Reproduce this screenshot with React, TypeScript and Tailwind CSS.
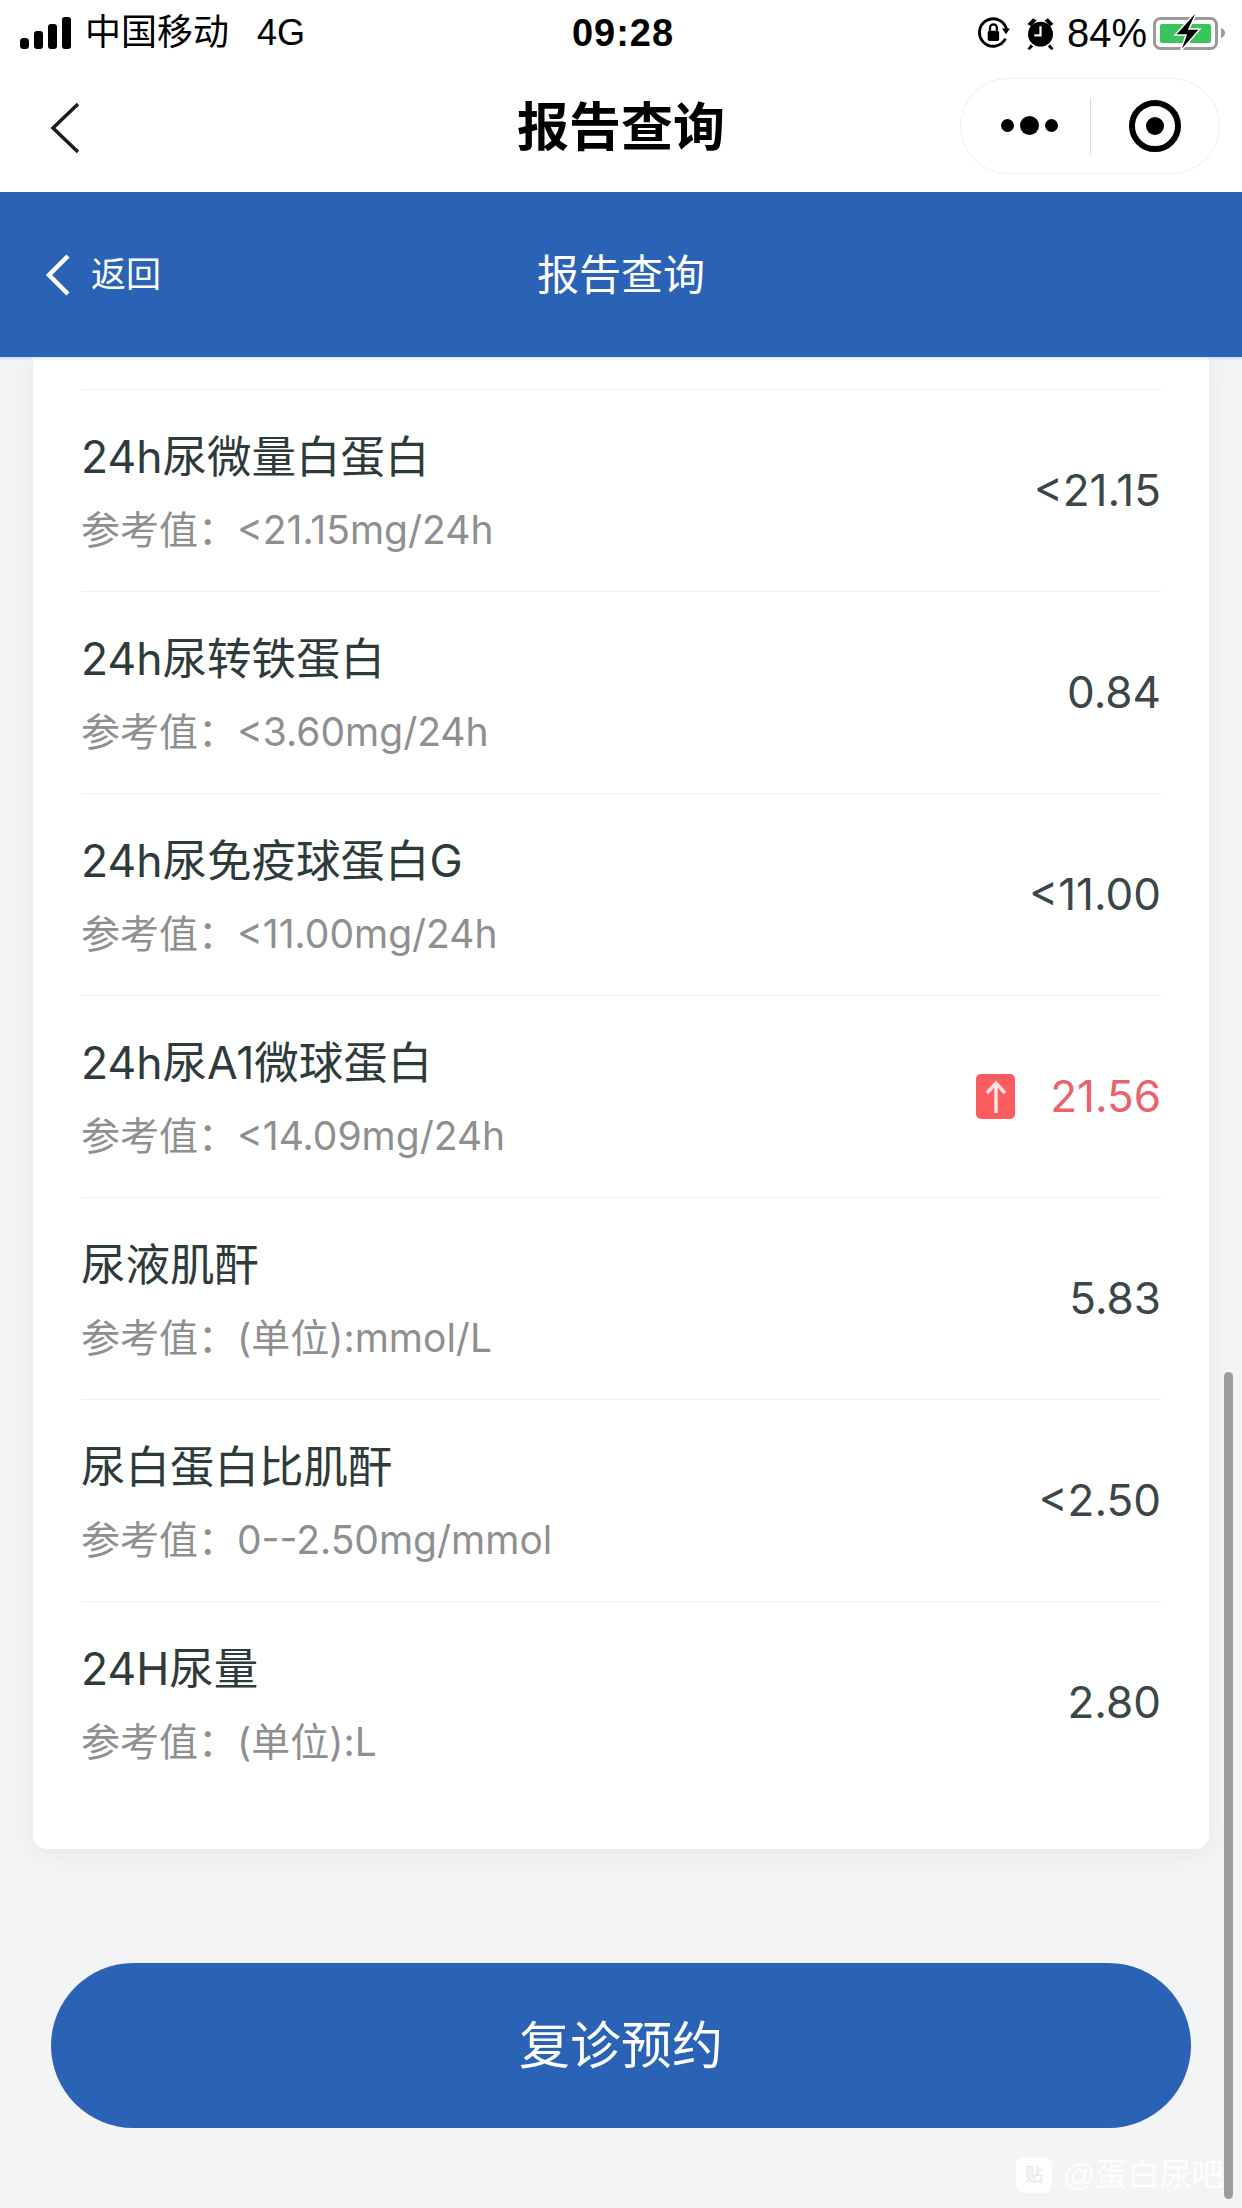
const rows = [
  { name: "24h尿微量白蛋白", ref: "参考值\uFF1A<21.15mg/24h", value: "<21.15" },
  { name: "24h尿转铁蛋白", ref: "参考值\uFF1A<3.60mg/24h", value: "0.84" },
  { name: "24h尿免疫球蛋白G", ref: "参考值\uFF1A<11.00mg/24h", value: "<11.00" },
  { name: "24h尿A1微球蛋白", ref: "参考值\uFF1A<14.09mg/24h", value: "21.56", high: true },
  { name: "尿液肌酐", ref: "参考值\uFF1A(单位):mmol/L", value: "5.83" },
  { name: "尿白蛋白比肌酐", ref: "参考值\uFF1A0--2.50mg/mmol", value: "<2.50" },
  { name: "24H尿量", ref: "参考值\uFF1A(单位):L", value: "2.80" },
];

const StatusBar = () => (
  <div className="grid h-[63px] grid-cols-[1fr_auto_1fr] items-center bg-white pt-[3px] pr-[16px] pl-[20px] text-black">
    <div className="flex items-center">
      <svg width="51" height="32" viewBox="0 0 51 32" fill="#000">
        <rect x="0" y="21" width="9" height="11" rx="3.500" />
        <rect x="14" y="14" width="9" height="18" rx="3" />
        <rect x="28" y="7" width="9" height="25" rx="3" />
        <rect x="42" y="0" width="9" height="32" rx="3" />
      </svg>
      <span className="ml-[14px] text-[36px] leading-none">中国移动</span>
      <span className="ml-[28px] text-[36px] leading-none">4G</span>
    </div>
    <span className="text-[38px] leading-none font-bold tracking-[1px]">09:28</span>
    <div className="flex items-center justify-end">
      <svg width="32" height="32" viewBox="0 0 28 28" fill="none">
        <path d="M24 19a12 12 0 1 1 1-8" stroke="#000" strokeWidth="2.500" />
        <path d="M21 10h7l-3.500 5z" fill="#000" />
        <rect x="8.500" y="12" width="10" height="9" rx="1.500" fill="#000" />
        <path d="M10.500 12V9.500a3 3 0 0 1 6 0V12" stroke="#000" strokeWidth="2" />
      </svg>
      <svg className="ml-[16px]" width="29" height="34" viewBox="0 0 25 30" fill="#000">
        <circle cx="12.500" cy="16" r="11" />
        <path d="M1 7l5-5 3 2-5 5zM24 7l-5-5-3 2 5 5zM4 25l-3 4 2 1 3-3zM21 25l3 4-2 1-3-3z" />
        <path d="M12.500 9v8H7" stroke="#fff" strokeWidth="2" fill="none" />
      </svg>
      <span className="ml-[12px] text-[40px] leading-none">84%</span>
      <svg className="ml-[6px]" width="73" height="38" viewBox="0 0 73 38" fill="none">
        <rect x="1.500" y="4.500" width="62" height="30" rx="6" stroke="#9a9a9a" strokeWidth="3" />
        <rect x="7" y="10" width="51" height="19" rx="2" fill="#3cc45c" />
        <path d="M68 14c3 1 4 3 4 5s-1 4-4 5z" fill="#9a9a9a" />
        <path d="M41 0L22 21h11l-6 17 20-23H36l7-15z" fill="#000" stroke="#fff" strokeWidth="1.500" />
      </svg>
    </div>
  </div>
);

const NavBar = () => (
  <div className="grid h-[129px] grid-cols-[1fr_auto_1fr] items-center bg-white">
    <div className="pl-[50px]">
      <svg width="30" height="52" viewBox="0 0 30 52" fill="none">
        <path d="M28 2L3 26l25 24" stroke="#1a1a1a" strokeWidth="3.500" />
      </svg>
    </div>
    <span className="text-[52px] leading-none font-bold text-black">报告查询</span>
    <div className="flex justify-end pr-[22px]">
      <div className="mb-[4px] flex h-[96px] w-[260px] items-center rounded-full border border-[#eeeeee]">
        <div className="flex w-[129px] items-center justify-center gap-[6px] pl-[7px]">
          <span className="h-[13px] w-[13px] rounded-full bg-black" />
          <span className="h-[19px] w-[19px] rounded-full bg-black" />
          <span className="h-[13px] w-[13px] rounded-full bg-black" />
        </div>
        <div className="h-[56px] w-px bg-[#dddddd]" />
        <div className="flex flex-1 items-center justify-center">
          <div className="flex h-[52px] w-[52px] items-center justify-center rounded-full border-[6px] border-black">
            <span className="h-[18px] w-[18px] rounded-full bg-black" />
          </div>
        </div>
      </div>
    </div>
  </div>
);

const Header = () => (
  <div className="relative z-10 grid h-[165px] grid-cols-[1fr_auto_1fr] items-center bg-[#2a62b5] text-white shadow-[0_2px_2px_rgba(120,170,210,0.25)]">
    <div className="flex items-center pl-[44px]">
      <svg width="27" height="42" viewBox="0 0 27 42" fill="none">
        <path d="M24 2L5 21l19 19" stroke="#fff" strokeWidth="4.500" />
      </svg>
      <span className="ml-[20px] text-[35px] leading-none">返回</span>
    </div>
    <span className="pt-[2px] text-[42px] leading-none">报告查询</span>
  </div>
);

const Row = ({ name, ref: refText, value, high }: (typeof rows)[number] & { high?: boolean }) => (
  <div className="flex h-[202px] items-center justify-between border-b border-[#eeeeee] font-['Inter','Noto_Sans_CJK_SC',sans-serif]">
    <div className="flex flex-col gap-[26px]">
      <span className="text-[44.5px] leading-[52px] text-[#2e3b3b]">{name}</span>
      <span className="text-[39px] leading-[42px] text-[#8f8f8f]">{refText}</span>
    </div>
    <div className="mb-[2px] flex items-center">
      {high && (
        <div className="mt-[2px] mr-[35px] flex h-[45px] w-[39px] items-center justify-center rounded-[5px] bg-[#fb5c5f]">
          <svg width="22" height="34" viewBox="0 0 22 34" fill="none">
            <path d="M11 33V3M2 13l9-10 9 10" stroke="#fde3e3" strokeWidth="3.500" />
          </svg>
        </div>
      )}
      <span className={high ? "text-[44px] text-[#e8636a]" : "text-[44px] text-[#3a4647]"}>{value}</span>
    </div>
  </div>
);

export default function App() {
  return (
    <div className="relative h-[2208px] w-[1242px] overflow-hidden bg-[#f3f4f6] font-['Liberation_Sans','Noto_Sans_CJK_SC',sans-serif]">
      <StatusBar />
      <NavBar />
      <Header />
      <div className="flex flex-col px-[33px]">
        <div className="rounded-b-[14px] bg-white px-[48px] pt-[32px] pb-[45px] shadow-[0_4px_24px_rgba(0,0,0,0.06)]">
          <div className="border-t border-[#eeeeee]">
            {rows.map((row, i) => (
              <div key={row.name} className={i === rows.length - 1 ? "[&>div]:border-b-0" : ""}>
                <Row {...row} />
              </div>
            ))}
          </div>
        </div>
        <button className="mx-[18px] mt-[114px] h-[165px] rounded-full bg-[#2a62b5] pt-[4px] text-[51px] text-white">
          复诊预约
        </button>
      </div>

      <div className="absolute top-[1372px] left-[1224px] h-[827px] w-[9px] rounded-full bg-[#9c9c9f]" />
      <div className="absolute top-[2157px] left-[1016px] flex items-center whitespace-nowrap text-white/80">
        <div className="flex h-[36px] w-[36px] items-center justify-center rounded-[8px] bg-white/80 text-[18px] leading-none text-[#e4e5e8]">
          贴
        </div>
        <span className="ml-[11px] text-[32px] leading-none">@蛋白尿吧</span>
      </div>
    </div>
  );
}
